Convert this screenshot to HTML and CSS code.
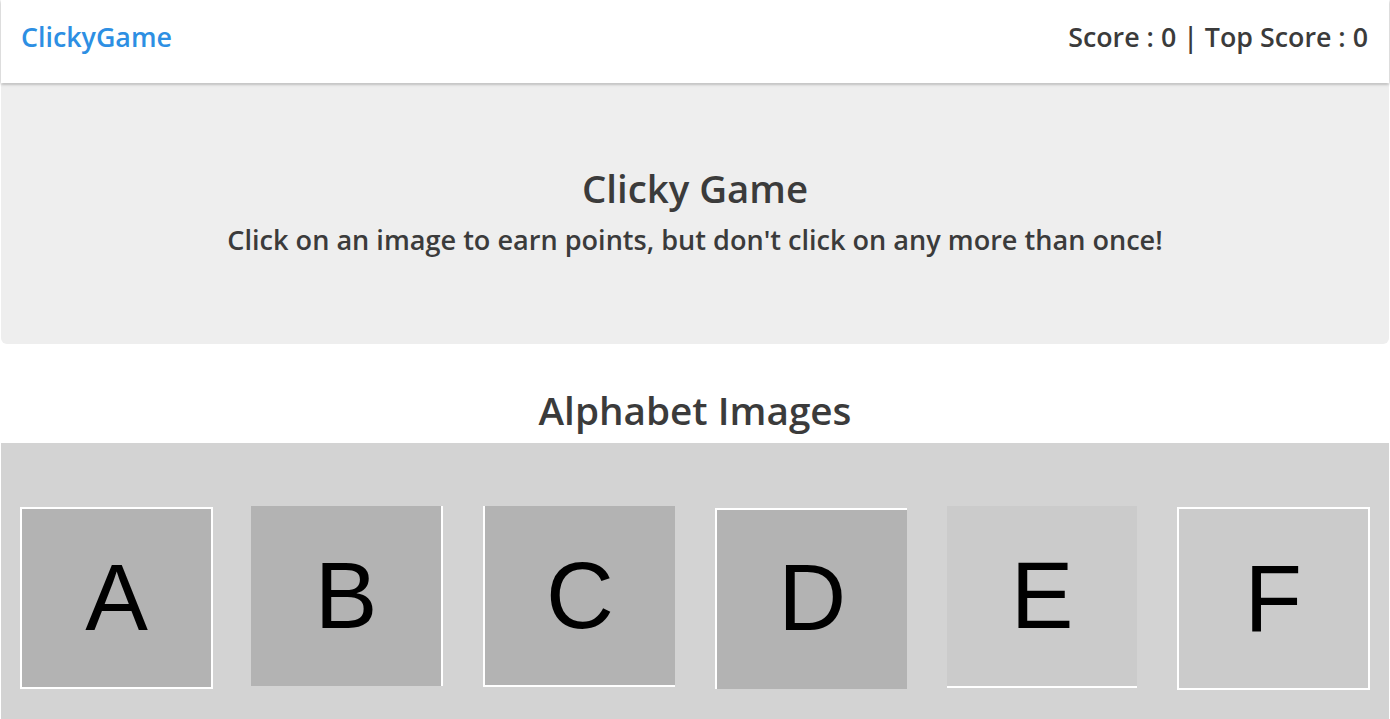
FILE: index.html
```html
<!DOCTYPE html>
<html lang="en">
<head>
<meta charset="utf-8">
<title>ClickyGame</title>
<link rel="stylesheet" href="styles.css">
</head>
<body>
<div class="page">
  <nav class="navbar">
    <a class="brand" href="#">ClickyGame</a>
    <div class="score">Score : 0 | Top Score : 0</div>
  </nav>
  <header class="jumbotron">
    <h1 class="title">Clicky Game</h1>
    <h4 class="subtitle">Click on an image to earn points, but don't click on any more than once!</h4>
  </header>
  <h2 class="section-title">Alphabet Images</h2>
  <section class="board">
    <div class="col"><div class="tile tile-a">A</div></div>
    <div class="col"><div class="tile tile-b">B</div></div>
    <div class="col"><div class="tile tile-c">C</div></div>
    <div class="col"><div class="tile tile-d">D</div></div>
    <div class="col"><div class="tile tile-e">E</div></div>
    <div class="col"><div class="tile tile-f">F</div></div>
  </section>
</div>
</body>
</html>
```

FILE: styles.css
```css
* { box-sizing: border-box; }
html, body { margin: 0; padding: 0; background: #fff; }
body {
  font-family: "Open Sans", "Noto Sans", "Liberation Sans", sans-serif;
  color: #3b3b3b;
  overflow: hidden;
}
.page {
  width: 1388px;
  margin-left: 1px;
}
.navbar {
  height: 83px;
  background: #fff;
  display: flex;
  align-items: flex-start;
  justify-content: space-between;
  padding: 21px 21px 0 20px;
  box-shadow: 0 1px 3px rgba(0,0,0,0.35);
  position: relative;
  z-index: 1;
}
.brand {
  color: #2d8fe3;
  text-decoration: none;
  font-size: 26.8px;
  font-weight: 600;
  line-height: 1.2;
}
.score {
  font-size: 26.8px;
  font-weight: 600;
  line-height: 1.2;
  color: #3b3b3b;
}
.jumbotron {
  background: #eeeeee;
  height: 260px;
  margin-top: 1px;
  padding-top: 81px;
  border-radius: 0 0 6px 6px;
  text-align: center;
}
.title {
  margin: 0;
  font-size: 38.4px;
  font-weight: 600;
  line-height: 1.2;
}
.subtitle {
  margin: 13px 0 0;
  font-size: 27.1px;
  font-weight: 600;
  line-height: 1.2;
}
.section-title {
  margin: 43px 0 10px;
  text-align: center;
  font-size: 38.7px;
  font-weight: 600;
  line-height: 1.2;
}
.board {
  background: #d3d3d3;
  display: grid;
  grid-template-columns: repeat(6, 1fr);
  padding: 63px 0 40px;
}
.col {
  padding: 0 19px;
  display: flex;
  align-items: flex-start;
}
.tile {
  width: 100%;
  height: 182px;
  background: #b3b3b3;
  display: flex;
  align-items: center;
  justify-content: center;
  font-family: "Liberation Sans", Arial, sans-serif;
  font-size: 94px;
  line-height: 1;
  color: #000;
}
.tile-a { border: 2px solid #fff; margin-top: 1px; }
.tile-b { border-right: 2px solid #fff; height: 180px; width: calc(100% - 2px); }
.tile-c { border-left: 2px solid #fff; border-bottom: 2px solid #fff; height: 181px; width: calc(100% - 1px); }
.tile-d { border-top: 2px solid #fff; border-left: 2px solid #fff; margin-top: 2px; height: 181px; padding-bottom: 4px; margin-left: 1px; width: calc(100% - 1px); }
.tile-e { background: #cbcbcb; border-bottom: 2px solid #fff; height: 182px; margin-left: 2px; width: calc(100% - 4px); }
.tile-f { background: #cbcbcb; border: 2px solid #fff; margin-top: 1px; height: 183px; }
```
